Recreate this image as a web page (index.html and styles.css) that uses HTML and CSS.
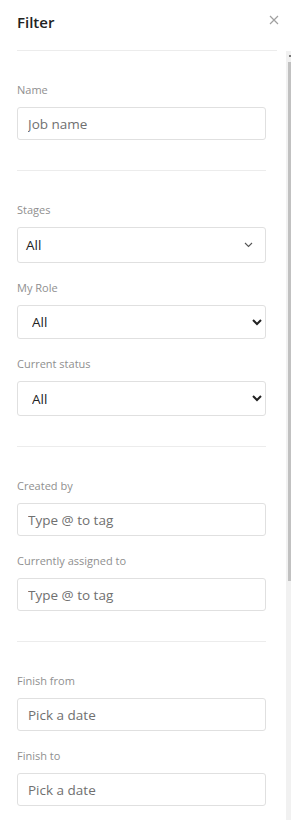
FILE: index.html
```html
<!DOCTYPE html>
<html lang="en">
<head>
<meta charset="UTF-8">
<meta name="viewport" content="width=device-width, initial-scale=1.0">
<title>Filter</title>
<link rel="stylesheet" href="styles.css">
</head>
<body>
<div class="panel">
  <div class="panel-header">
    <h2 class="panel-title">Filter</h2>
    <button class="close-btn" type="button" aria-label="Close">
      <svg width="10" height="10" viewBox="0 0 10 10"><path d="M1 1L9 9M9 1L1 9" stroke="#a0a0a0" stroke-width="1.2" fill="none"/></svg>
    </button>
  </div>
  <div class="panel-main">
    <div class="panel-body">
      <div class="section">
        <div class="field">
          <label class="field-label">Name</label>
          <input class="text-input" type="text" placeholder="Job name">
        </div>
      </div>

      <div class="section">
        <div class="field">
          <label class="field-label">Stages</label>
          <div class="fake-select">
            <span>All</span>
            <svg width="9" height="6" viewBox="0 0 9 6"><path d="M1 1L4.5 4.5L8 1" stroke="#555" stroke-width="1.1" fill="none"/></svg>
          </div>
        </div>
        <div class="field">
          <label class="field-label">My Role</label>
          <select class="select-input"><option>All</option></select>
        </div>
        <div class="field">
          <label class="field-label">Current status</label>
          <select class="select-input tall"><option>All</option></select>
        </div>
      </div>

      <div class="section">
        <div class="field">
          <label class="field-label">Created by</label>
          <input class="text-input" type="text" placeholder="Type @ to tag">
        </div>
        <div class="field">
          <label class="field-label">Currently assigned to</label>
          <input class="text-input" type="text" placeholder="Type @ to tag">
        </div>
      </div>

      <div class="section last">
        <div class="field">
          <label class="field-label">Finish from</label>
          <input class="text-input" type="text" placeholder="Pick a date">
        </div>
        <div class="field">
          <label class="field-label">Finish to</label>
          <input class="text-input" type="text" placeholder="Pick a date">
        </div>
      </div>
    </div>
    <div class="scrollbar">
      <div class="scroll-arrow"></div>
      <div class="scroll-thumb"></div>
    </div>
  </div>
</div>
</body>
</html>
```

FILE: styles.css
```css
html, body {
  margin: 0;
  padding: 0;
  overflow: hidden;
  background: #fff;
}

body {
  font-family: "Open Sans", "Noto Sans", sans-serif;
  color: #222;
}

/* Panel */
.panel {
  width: 291px;
  height: 820px;
  display: flex;
  flex-direction: column;
}

.panel-header {
  height: 50px;
  margin: 0 14px 0 17px;
  border-bottom: 1px solid #ececec;
  display: flex;
  align-items: center;
  justify-content: space-between;
  flex-shrink: 0;
}

.panel-title {
  margin: 0;
  font-size: 15px;
  font-weight: 600;
  color: #222;
  position: relative;
  top: -3px;
}

.close-btn {
  background: none;
  border: none;
  padding: 0;
  margin-right: -2px;
  width: 10px;
  height: 10px;
  display: flex;
  position: relative;
  top: -5px;
  cursor: pointer;
}

.panel-main {
  flex: 1;
  display: flex;
  min-height: 0;
}

.panel-body {
  flex: 1;
  overflow: hidden;
  padding: 0 20px 0 17px;
}

/* Scrollbar (window clips it to its left edge) */
.scrollbar {
  width: 5px;
  background: #f1f1f1;
  display: flex;
  flex-direction: column;
}

.scroll-arrow {
  width: 2px;
  height: 2px;
  margin: 4px 0 0 3px;
  background: #7a7a7a;
}

.scroll-thumb {
  height: 519px;
  margin: 5px 0 0 2px;
  background: #c1c1c1;
}

/* Sections */
.section {
  padding: 30px 0 30px;
  border-bottom: 1px solid #ececec;
}

.section.last {
  border-bottom: none;
}

.field + .field {
  margin-top: 16px;
}

.field-label {
  display: block;
  font-size: 11px;
  line-height: 18px;
  color: #8f8f8f;
  margin-bottom: 8px;
}

.text-input {
  display: block;
  width: 100%;
  height: 33px;
  box-sizing: border-box;
  border: 1px solid #e0e0e0;
  border-radius: 3px;
  padding: 0 10px;
  font-family: inherit;
  font-size: 13.5px;
  color: #222;
  outline: none;
}

.text-input::placeholder {
  color: #707070;
}

.fake-select {
  height: 36px;
  box-sizing: border-box;
  border: 1px solid #e0e0e0;
  border-radius: 3px;
  padding: 0 12px 0 8px;
  display: flex;
  align-items: center;
  justify-content: space-between;
  font-size: 13.5px;
  color: #222;
}

.select-input {
  display: block;
  width: 100%;
  height: 34px;
  box-sizing: border-box;
  border: 1px solid #e0e0e0;
  border-radius: 3px;
  padding: 0 6px 0 10px;
  background: #fff;
  font-family: inherit;
  font-size: 13.5px;
  color: #222;
}

.select-input.tall {
  height: 35px;
}
```
